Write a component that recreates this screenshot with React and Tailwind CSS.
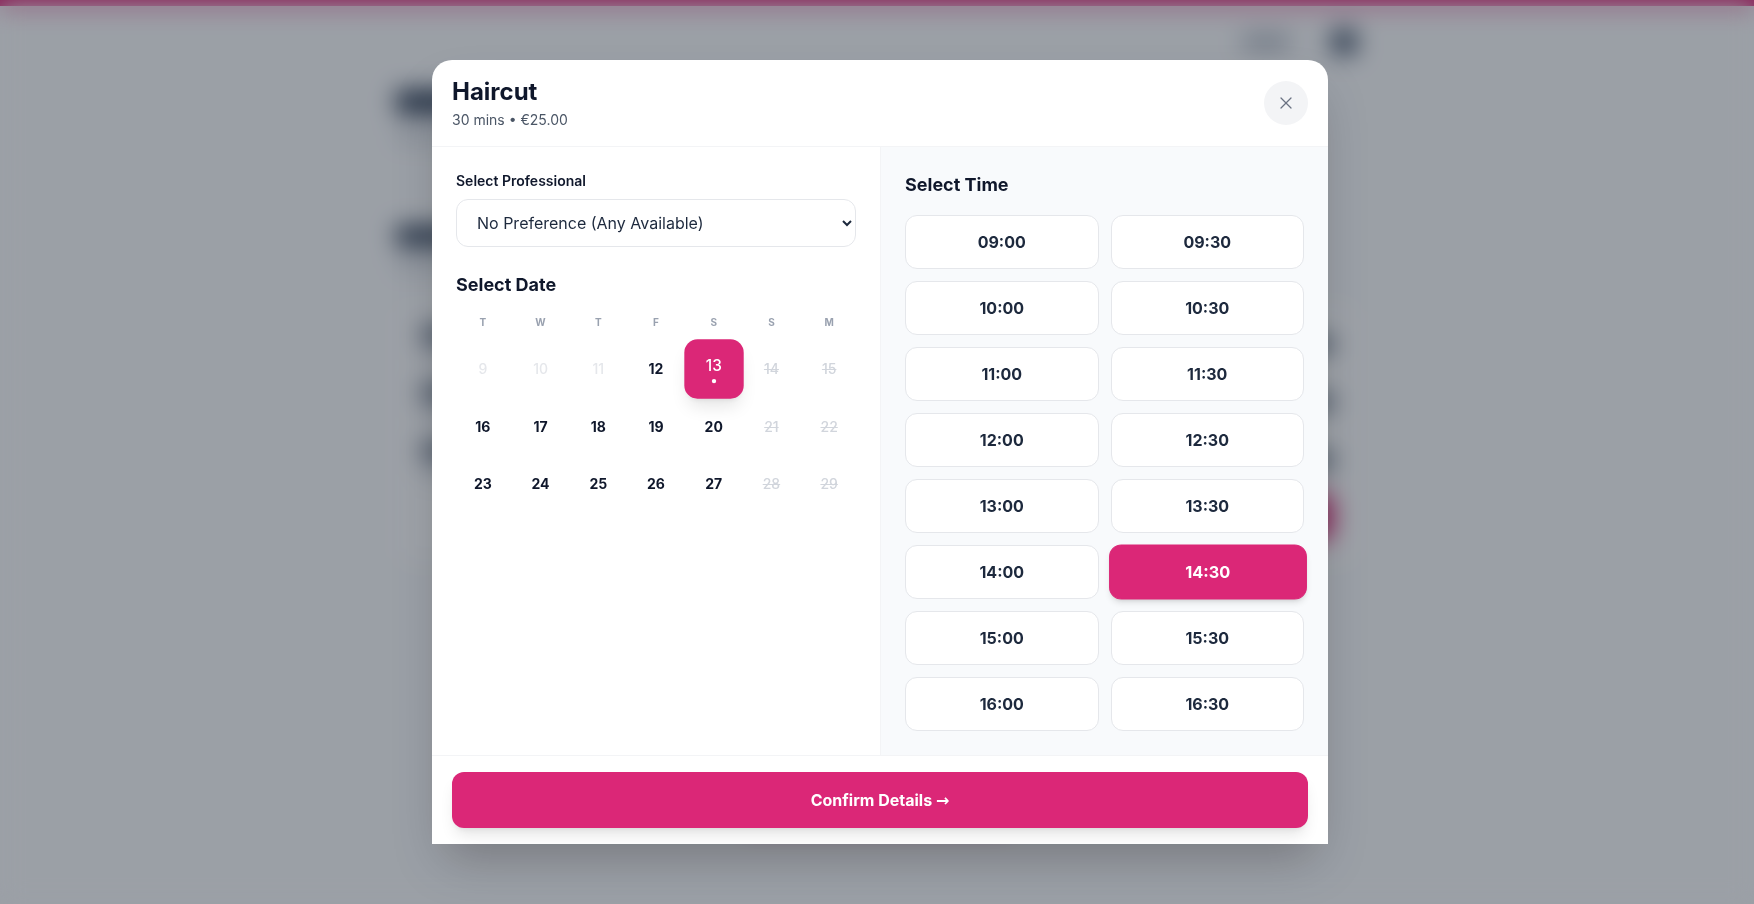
import React, { useState } from 'react';
import { X } from 'lucide-react';

const weekdays = ['T', 'W', 'T', 'F', 'S', 'S', 'M'];

// status: past | open | closed
const days = [
  { d: 9, s: 'past' }, { d: 10, s: 'past' }, { d: 11, s: 'past' }, { d: 12, s: 'open' },
  { d: 13, s: 'open' }, { d: 14, s: 'closed' }, { d: 15, s: 'closed' },
  { d: 16, s: 'open' }, { d: 17, s: 'open' }, { d: 18, s: 'open' }, { d: 19, s: 'open' },
  { d: 20, s: 'open' }, { d: 21, s: 'closed' }, { d: 22, s: 'closed' },
  { d: 23, s: 'open' }, { d: 24, s: 'open' }, { d: 25, s: 'open' }, { d: 26, s: 'open' },
  { d: 27, s: 'open' }, { d: 28, s: 'closed' }, { d: 29, s: 'closed' },
];

const times = [
  '09:00', '09:30', '10:00', '10:30', '11:00', '11:30', '12:00', '12:30',
  '13:00', '13:30', '14:00', '14:30', '15:00', '15:30', '16:00', '16:30',
];

// page behind the modal, blurred out by the overlay
function BackgroundPage() {
  return (
    <div className="min-h-screen bg-gray-50">
      <div className="h-1.5 bg-[#db2777]" />
      <header className="mx-auto w-[962px] h-[72px] flex items-center justify-end gap-10">
        <div className="h-3 w-12 rounded bg-gray-400" />
        <div className="w-7 h-7 rounded-full bg-slate-600" />
      </header>
      <main className="mx-auto w-[962px]">
        <div className="mt-3 h-6 w-56 rounded bg-slate-700" />
        <div className="mt-4 h-3 w-40 rounded bg-gray-300" />
        <div className="mt-[84px] h-5 w-28 rounded bg-slate-700" />
        <div className="mt-3 h-3 w-48 rounded bg-gray-300" />
        <div className="mt-8 bg-white rounded-2xl border border-gray-200 p-6 flex flex-col gap-6">
          {[0, 1, 2].map((n) => (
            <div key={n} className="flex items-center justify-between">
              <div>
                <div className="h-3.5 w-32 rounded bg-slate-600" />
                <div className="mt-2 h-3 w-20 rounded bg-gray-300" />
              </div>
              <div className="h-3.5 w-14 rounded bg-slate-600" />
            </div>
          ))}
          <div className="flex justify-end -mt-2">
            <div className="h-12 w-40 rounded-xl bg-[#db2777]" />
          </div>
        </div>
        <div className="mt-[212px] mx-auto w-[270px] h-12 rounded-xl bg-[#db2777]" />
      </main>
    </div>
  );
}

function DayCell({ day, selected, onPick }) {
  if (selected) {
    return (
      <button
        onClick={() => onPick(day.d)}
        className="aspect-square rounded-xl bg-[#db2777] text-white scale-110 shadow-lg flex flex-col items-center justify-center"
      >
        <span className="text-sm font-medium leading-5">{day.d}</span>
        <span className="mt-0.5 w-1 h-1 rounded-full bg-white" />
      </button>
    );
  }
  if (day.s === 'past') {
    return <div className="aspect-square flex items-center justify-center text-sm font-medium text-gray-200">{day.d}</div>;
  }
  if (day.s === 'closed') {
    return <div className="aspect-square flex items-center justify-center text-sm font-medium text-gray-300 line-through">{day.d}</div>;
  }
  return (
    <button
      onClick={() => onPick(day.d)}
      className="aspect-square rounded-xl flex items-center justify-center text-sm font-bold text-slate-900"
    >
      {day.d}
    </button>
  );
}

function BookingModal() {
  const [date, setDate] = useState(13);
  const [time, setTime] = useState('14:30');

  return (
    <div className="w-[896px] ml-[6px] bg-white rounded-t-[20px] shadow-2xl overflow-hidden flex flex-col">
      {/* header */}
      <div className="flex items-center justify-between px-5 py-4 border-b border-gray-100">
        <div>
          <h2 className="text-2xl leading-8 font-bold text-slate-900">Haircut</h2>
          <p className="text-sm leading-5 text-gray-600 mt-0.5">30 mins • €25.00</p>
        </div>
        <button className="w-11 h-11 rounded-full bg-gray-100 flex items-center justify-center text-gray-500">
          <X size={20} strokeWidth={1.5} />
        </button>
      </div>

      {/* body */}
      <div className="grid grid-cols-2">
        <div className="p-6">
          <label className="block text-sm font-semibold text-slate-900 mb-2">Select Professional</label>
          <select className="w-full h-12 pl-4 pr-2 rounded-xl border border-gray-200 bg-white text-base text-slate-800">
            <option>No Preference (Any Available)</option>
            <option>Sarah</option>
            <option>Emma</option>
          </select>

          <h3 className="mt-6 mb-4 text-lg font-bold text-slate-900">Select Date</h3>
          <div className="grid grid-cols-7 gap-1 mb-3">
            {weekdays.map((w, i) => (
              <div key={i} className="text-center text-[10px] leading-[15px] font-bold text-gray-400">{w}</div>
            ))}
          </div>
          <div className="grid grid-cols-7 gap-1">
            {days.map((day) => (
              <DayCell key={day.d} day={day} selected={day.d === date} onPick={setDate} />
            ))}
          </div>
        </div>

        <div className="p-6 bg-slate-50 border-l border-gray-100">
          <h3 className="mb-4 text-lg font-bold text-slate-900">Select Time</h3>
          <div className="grid grid-cols-2 gap-3">
            {times.map((t) =>
              t === time ? (
                <button
                  key={t}
                  onClick={() => setTime(t)}
                  className="py-3.5 rounded-xl border border-[#db2777] bg-[#db2777] text-white text-base font-bold scale-[1.02] shadow-md"
                >
                  {t}
                </button>
              ) : (
                <button
                  key={t}
                  onClick={() => setTime(t)}
                  className="py-3.5 rounded-xl border border-gray-200 bg-white text-slate-800 text-base font-bold"
                >
                  {t}
                </button>
              )
            )}
          </div>
        </div>
      </div>

      {/* footer */}
      <div className="px-5 py-4 border-t border-gray-100">
        <button className="w-full h-14 rounded-xl bg-[#db2777] text-white text-base font-bold shadow-lg">
          Confirm Details <span className="font-['DejaVu_Sans']">→</span>
        </button>
      </div>
    </div>
  );
}

export default function App() {
  return (
    <div className="relative min-h-screen font-['Inter',sans-serif]">
      <BackgroundPage />
      <div className="fixed inset-0 bg-gray-900/40 backdrop-blur-md flex items-center justify-center">
        <BookingModal />
      </div>
    </div>
  );
}
